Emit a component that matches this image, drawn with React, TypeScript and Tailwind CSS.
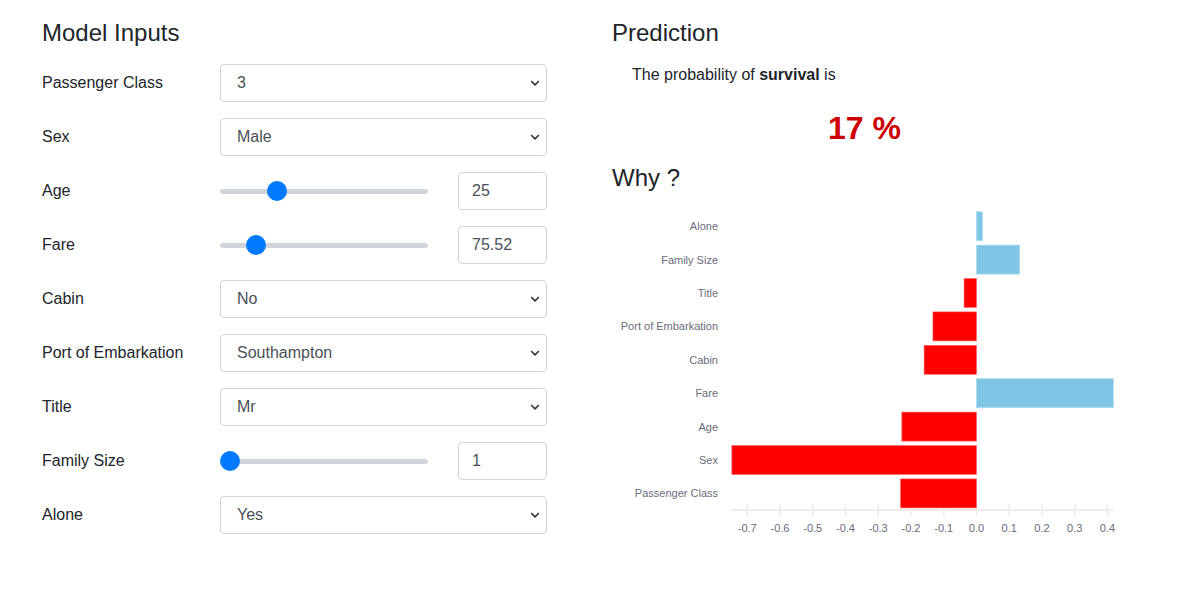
import React from "react";

const font = { fontFamily: '"Liberation Sans", Arial, sans-serif' };

function Chevron() {
  return (
    <svg
      className="pointer-events-none absolute right-[6px] top-1/2 -translate-y-1/2"
      width="12"
      height="12"
      viewBox="0 0 16 16"
    >
      <path d="M3.5 6 L8 10.5 L12.5 6" fill="none" stroke="#343a40" strokeWidth="2.2" strokeLinecap="round" strokeLinejoin="round" />
    </svg>
  );
}

function SelectBox({ value }: { value: string }) {
  return (
    <div className="relative w-[327px] h-[38px]">
      <select
        defaultValue={value}
        className="appearance-none w-full h-full border border-[#ced4da] rounded-[4px] bg-white pl-4 pr-8 text-[16px] text-[#495057] outline-none"
        style={font}
      >
        <option value={value}>{value}</option>
      </select>
      <Chevron />
    </div>
  );
}

function Slider({ value, min, max, num }: { value: number; min: number; max: number; num: string }) {
  const frac = (value - min) / (max - min);
  return (
    <div className="flex items-center w-[327px] h-[38px] gap-[30px]">
      <div className="relative w-[208px] h-[20px] flex items-center">
        <div className="w-full h-[5px] rounded-full bg-[#d1d5db]" />
        <div
          className="absolute top-0 w-[20px] h-[20px] rounded-full bg-[#007bff]"
          style={{ left: `${frac * 188}px` }}
        />
      </div>
      <input
        readOnly
        value={num}
        className="w-[89px] h-[38px] border border-[#ced4da] rounded-[4px] pl-[13px] text-[16px] text-[#495057] outline-none"
        style={font}
      />
    </div>
  );
}

const rows: { label: string; kind: "select" | "slider"; value: string; sv?: number; min?: number; max?: number }[] = [
  { label: "Passenger Class", kind: "select", value: "3" },
  { label: "Sex", kind: "select", value: "Male" },
  { label: "Age", kind: "slider", value: "25", sv: 25, min: 0, max: 100 },
  { label: "Fare", kind: "slider", value: "75.52", sv: 75.52, min: 0, max: 550 },
  { label: "Cabin", kind: "select", value: "No" },
  { label: "Port of Embarkation", kind: "select", value: "Southampton" },
  { label: "Title", kind: "select", value: "Mr" },
  { label: "Family Size", kind: "slider", value: "1", sv: 1, min: 1, max: 11 },
  { label: "Alone", kind: "select", value: "Yes" },
];

const bars = [
  { label: "Alone", v: 0.018 },
  { label: "Family Size", v: 0.132 },
  { label: "Title", v: -0.038 },
  { label: "Port of Embarkation", v: -0.133 },
  { label: "Cabin", v: -0.16 },
  { label: "Fare", v: 0.418 },
  { label: "Age", v: -0.228 },
  { label: "Sex", v: -0.747 },
  { label: "Passenger Class", v: -0.232 },
];

function Chart() {
  const zero = 364.5;
  const scale = 327.5;
  const ticks = [-0.7, -0.6, -0.5, -0.4, -0.3, -0.2, -0.1, 0, 0.1, 0.2, 0.3, 0.4];
  return (
    <svg width="505" height="340" style={{ fontFamily: '"Liberation Sans", Arial, sans-serif' }}>
      <line x1="120" x2="501" y1="305" y2="305" stroke="#ececec" strokeWidth="2" />
      {ticks.map((t) => {
        const x = zero + t * scale;
        return (
          <g key={t}>
            <line x1={x} x2={x} y1="299" y2="311" stroke="#ececec" strokeWidth="1.5" />
            <text x={x} y="327" fontSize="11" fill="#6b6b7b" textAnchor="middle">
              {t.toFixed(1)}
            </text>
          </g>
        );
      })}
      {bars.map((b, i) => {
        const cy = 21.2 + i * 33.4;
        const x1 = zero + Math.min(0, b.v) * scale;
        const w = Math.abs(b.v) * scale;
        const pos = b.v > 0;
        return (
          <g key={b.label}>
            <text x="106" y={cy + 4} fontSize="11" fill="#6b6b7b" textAnchor="end">
              {b.label}
            </text>
            <rect
              x={x1}
              y={cy - 14.5}
              width={w}
              height="29"
              fill={pos ? "#7ec6e3" : "#ff0000"}
              stroke={pos ? "#a8dbef" : "#ff6666"}
              strokeWidth="0.6"
            />
          </g>
        );
      })}
    </svg>
  );
}

export default function App() {
  return (
    <div className="w-[1190px] h-[589px] bg-white text-[#212529] flex pt-[18px] pl-[42px] gap-[65px]" style={font}>
      <div className="w-[505px] flex flex-col">
        <h4 className="text-[24px] leading-[29px] font-normal mb-[17px]">Model Inputs</h4>
        <div className="flex flex-col gap-[16px]">
          {rows.map((r) => (
            <div key={r.label} className="flex items-center h-[38px]">
              <div className="w-[178px] text-[16px]">{r.label}</div>
              {r.kind === "select" ? (
                <SelectBox value={r.value} />
              ) : (
                <Slider value={r.sv!} min={r.min!} max={r.max!} num={r.value} />
              )}
            </div>
          ))}
        </div>
      </div>
      <div className="w-[505px] flex flex-col">
        <h4 className="text-[24px] leading-[29px] font-normal">Prediction</h4>
        <p className="mt-[16px] pl-[20px] text-[16px] leading-[24px]">
          The probability of <b className="font-bold">survival</b> is
        </p>
        <div className="mt-[22px] text-center text-[32px] leading-[38px] font-bold text-[#cc0000]">17 %</div>
        <h4 className="mt-[16px] text-[24px] leading-[29px] font-normal">Why ?</h4>
        <div className="mt-[13px]">
          <Chart />
        </div>
      </div>
    </div>
  );
}
